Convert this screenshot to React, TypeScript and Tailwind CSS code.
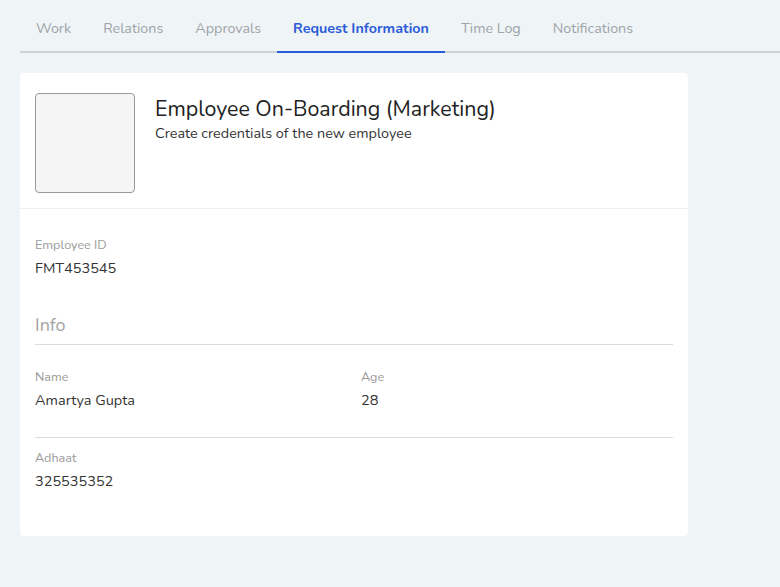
import React from 'react';

const tabs = ['Work', 'Relations', 'Approvals', 'Request Information', 'Time Log', 'Notifications'];

function Field({ label, value }: { label: string; value: string }) {
  return (
    <div className="flex flex-col">
      <span className="text-[12.6px] leading-[16px] text-[#9a9a9a]">{label}</span>
      <span className="mt-[6px] text-[14.5px] leading-[18px] text-[#333]">{value}</span>
    </div>
  );
}

export default function App() {
  return (
    <div className="min-h-[587px] bg-[#eff4f7] pl-5 font-['Nunito','Lato',sans-serif]">
      <div className="flex border-b-2 border-[#cdd2d5]">
        {tabs.map((t) => {
          const active = t === 'Request Information';
          return (
            <div
              key={t}
              className={
                active
                  ? 'px-4 pt-[20px] pb-[13px] -mb-[2px] border-b-2 border-[#2a5bd7] text-[14.3px] leading-[18px] font-bold text-[#2a5bd7]'
                  : 'px-4 pt-[20px] pb-[13px] text-[14.3px] leading-[18px] text-[#9ea3a8]'
              }
            >
              {t}
            </div>
          );
        })}
      </div>

      <div className="mt-5 w-[668px] rounded bg-white">
        <div className="flex gap-5 border-b border-[#f0f0f0] px-[15px] pt-5 pb-[15px]">
          <div className="h-[100px] w-[100px] rounded border border-[#999] bg-[#f5f5f5]" />
          <div className="pt-[2px]">
            <h1 className="text-[21.4px] leading-[28px] text-[#222]">Employee On-Boarding (Marketing)</h1>
            <p className="mt-[1px] text-[14.4px] leading-[18px] text-[#333]">Create credentials of the new employee</p>
          </div>
        </div>

        <div className="px-[15px] pt-[28px] pb-[46px]">
          <Field label="Employee ID" value="FMT453545" />

          <div className="mt-[36px] border-b border-[#dcdcdc] pb-[7px] text-[18px] leading-[24px] text-[#a3a3a3]">Info</div>

          <div className="grid grid-cols-2 border-b border-[#dcdcdc] pt-[24px] pb-[28px]">
            <Field label="Name" value="Amartya Gupta" />
            <div className="pl-[7px]">
              <Field label="Age" value="28" />
            </div>
          </div>

          <div className="pt-[12px]">
            <Field label="Adhaat" value="325535352" />
          </div>
        </div>
      </div>
    </div>
  );
}
